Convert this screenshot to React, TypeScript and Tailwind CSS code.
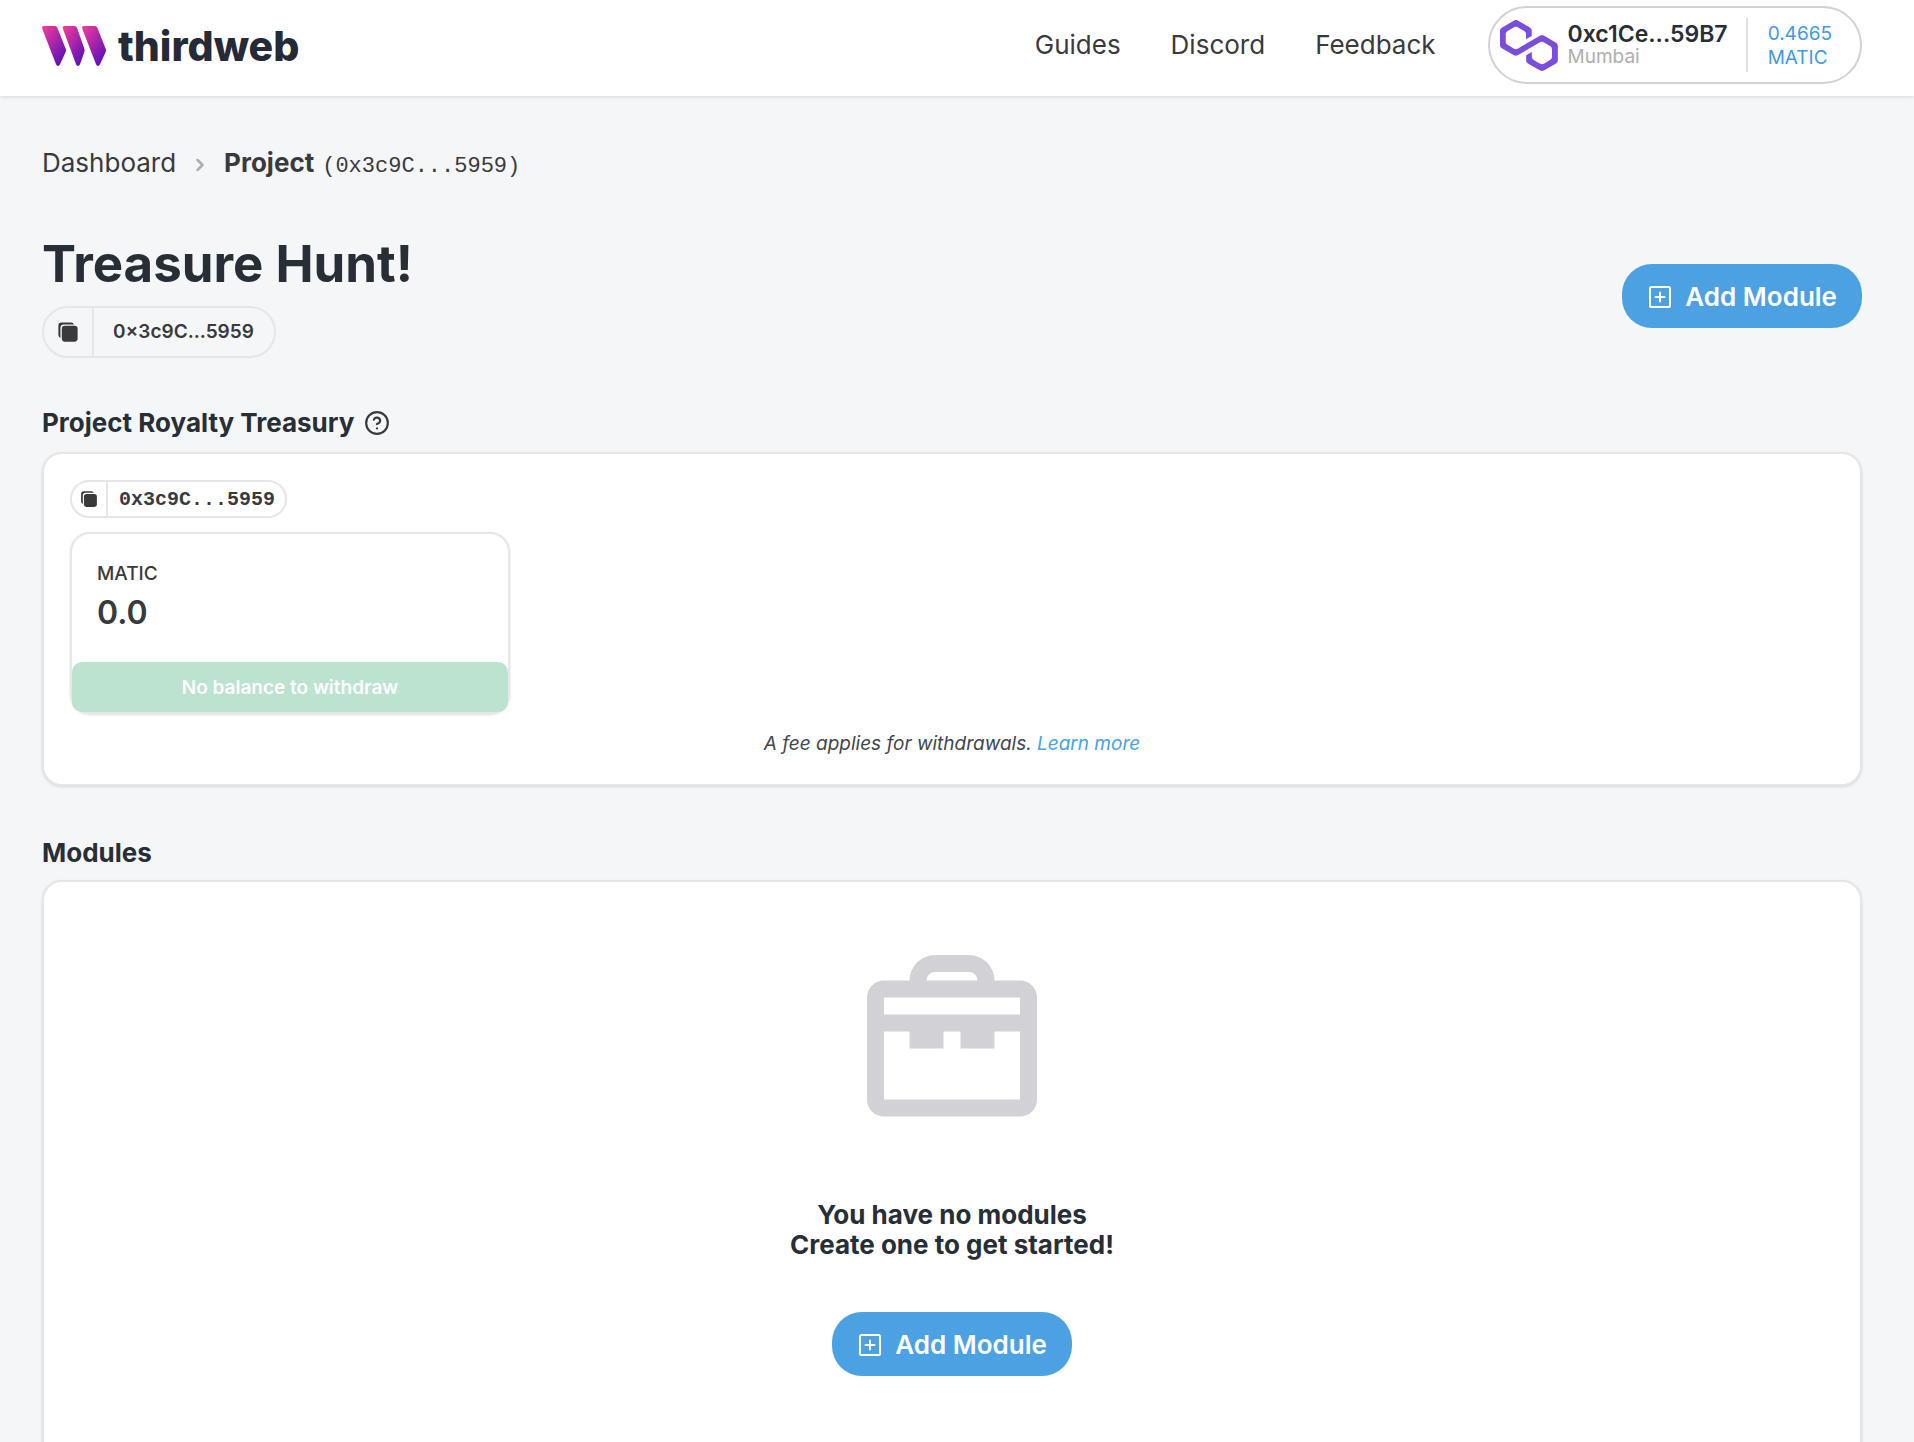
import React from "react";
import { IoCopy } from "react-icons/io5";
import { FiHelpCircle, FiChevronRight } from "react-icons/fi";

function BrandMark() {
  return (
    <svg viewBox="0 0 192 120" className="h-10 w-16" aria-hidden="true">
      <defs>
        <linearGradient id="brand" x1="0" y1="0" x2="0.75" y2="1">
          <stop offset="0.08" stopColor="#ea389c" />
          <stop offset="1" stopColor="#5c10b8" />
        </linearGradient>
      </defs>
      <path fill="url(#brand)" d="M5 0H38Q44 0 46 5L71 68Q73 73 71 78L54 115Q52 120 48 120Q44 120 42 115L1 9Q-1 0 5 0Z" />
      <path fill="url(#brand)" d="M67 0H97Q103 0 105 5L127 68Q129 73 127 78L114 115Q112 120 108 120Q104 120 102 115L63 9Q61 0 67 0Z" />
      <path fill="url(#brand)" d="M125 0H158Q164 0 166 5L191 68Q193 73 191 78L174 115Q172 120 168 120Q164 120 162 115L121 9Q119 0 125 0Z" />
    </svg>
  );
}

function PolygonMark() {
  return (
    <svg viewBox="0 0 38.4 33.5" className="h-[51px] w-[58px] shrink-0" fill="#7b4ddb" aria-hidden="true">
      <path d="M29,10.2c-0.7-0.4-1.6-0.4-2.4,0L21,13.5l-3.8,2.1l-5.5,3.3c-0.7,0.4-1.6,0.4-2.4,0L5,16.3c-0.7-0.4-1.2-1.2-1.2-2.1v-5c0-0.8,0.4-1.6,1.2-2.1l4.3-2.5c0.7-0.4,1.6-0.4,2.4,0L16,7.2c0.7,0.4,1.2,1.2,1.2,2.1v3.3l3.8-2.2V7c0-0.8-0.4-1.6-1.2-2.1l-8-4.7c-0.7-0.4-1.6-0.4-2.4,0L1.2,5C0.4,5.4,0,6.2,0,7v9.4c0,0.8,0.4,1.6,1.2,2.1l8.1,4.7c0.7,0.4,1.6,0.4,2.4,0l5.5-3.2l3.8-2.2l5.5-3.2c0.7-0.4,1.6-0.4,2.4,0l4.3,2.5c0.7,0.4,1.2,1.2,1.2,2.1v5c0,0.8-0.4,1.6-1.2,2.1L29,28.8c-0.7,0.4-1.6,0.4-2.4,0l-4.3-2.5c-0.7-0.4-1.2-1.2-1.2-2.1V21l-3.8,2.2v3.3c0,0.8,0.4,1.6,1.2,2.1l8.1,4.7c0.7,0.4,1.6,0.4,2.4,0l8.1-4.7c0.7-0.4,1.2-1.2,1.2-2.1V17c0-0.8-0.4-1.6-1.2-2.1L29,10.2z" />
    </svg>
  );
}

function ToolboxIcon() {
  return (
    <svg viewBox="0 0 24 24" className="size-[204px]" fill="#d1d1d6" fillRule="evenodd" aria-hidden="true">
      <path d="M10 2H14A3 3 0 0 1 17 5H20A2 2 0 0 1 22 7V19A2 2 0 0 1 20 21H4A2 2 0 0 1 2 19V7A2 2 0 0 1 4 5H7A3 3 0 0 1 10 2ZM10 4A1 1 0 0 0 9 5H15A1 1 0 0 0 14 4ZM4 7V9H20V7ZM4 11V19H20V11H17V13H13V11H11V13H7V11Z" />
    </svg>
  );
}

function PlusBoxIcon() {
  return (
    <svg viewBox="0 0 22 22" className="size-[22px] shrink-0" fill="none" stroke="currentColor" strokeLinecap="round" aria-hidden="true">
      <rect x="1" y="1" width="20" height="20" rx="1.6" strokeWidth="2" />
      <path d="M11 6.5V15.5M6.5 11H15.5" strokeWidth="2" />
    </svg>
  );
}

function AddModuleButton() {
  return (
    <button type="button" className="flex h-16 items-center gap-[14px] rounded-[30px] bg-[#4ba1e2] pt-0.5 pr-[25px] pl-[27px] text-[26px] leading-8 font-semibold text-white">
      <PlusBoxIcon />
      Add Module
    </button>
  );
}

export default function App() {
  return (
    <div className="min-h-screen bg-[#f5f6f8] font-['Inter',sans-serif] text-[#3a3a3c]">
      <header className="flex h-24 items-start justify-between bg-white pr-[52px] pl-[42px] shadow-[0_1px_4px_rgba(0,0,0,0.12)]">
        <a href="#" className="flex h-[91px] items-center gap-3 text-[#262936]">
          <BrandMark />
          <span className="text-[41px] leading-[48px] font-extrabold">thirdweb</span>
        </a>
        <div className="flex items-center gap-[52px] pt-[6px]">
          <nav className="flex gap-[50px] text-[26px] leading-8">
            <a href="#">Guides</a>
            <a href="#">Discord</a>
            <a href="#">Feedback</a>
          </nav>
          <button type="button" className="flex h-[78px] items-center rounded-full border-2 border-[#d1d1d6] pr-7 pl-[10px] text-left">
            <PolygonMark />
            <span className="ml-[10px] flex flex-col border-r-2 border-[#e0e0e4] py-1 pr-[18px]">
              <span className="text-[23px] leading-6 font-semibold text-[#272e36]">0xc1Ce...59B7</span>
              <span className="text-[19px] leading-[22px] text-[#aeaeb2]">Mumbai</span>
            </span>
            <span className="ml-5 flex flex-col pt-0.5 text-[19px] leading-6 text-[#4299e1]">
              <span>0.4665</span>
              <span>MATIC</span>
            </span>
          </button>
        </div>
      </header>

      <main className="pr-[52px] pb-12 pl-[42px]">
        <nav aria-label="Breadcrumb" className="mt-[51px] flex h-8 items-center text-[26px] leading-8">
          <a href="#">Dashboard</a>
          <FiChevronRight className="mx-[14px] mt-1 size-5 text-[#aeaeb2]" strokeWidth={3} />
          <a href="#" className="flex h-8 items-baseline gap-2">
            <span className="font-bold">Project</span>
            <span className="font-['Liberation_Mono',monospace] text-[22px]">(0x3c9C...5959)</span>
          </a>
        </nav>

        <div className="mt-[54px] flex items-center justify-between">
          <div className="flex flex-col items-start gap-[11px]">
            <h1 className="text-[51px] leading-[62px] font-bold text-[#272e36]">Treasure Hunt!</h1>
            <button type="button" className="flex h-[52px] items-stretch rounded-full border-2 border-[#e5e5ea] text-[19px] font-semibold">
              <span className="flex items-center border-r-2 border-[#e5e5ea] pr-[13px] pl-[13px]">
                <IoCopy className="size-[22px]" />
              </span>
              <span className="flex items-center pr-5 pl-[19px]">0×3c9C...5959</span>
            </button>
          </div>
          <AddModuleButton />
        </div>

        <section className="mt-12">
          <div className="flex items-center gap-[10px] leading-[34px]">
            <h2 className="text-[26px] font-bold text-[#272e36]">Project Royalty Treasury</h2>
            <FiHelpCircle className="size-[26px]" />
          </div>
          <div className="mt-3 rounded-[20px] border-2 border-[#e5e5ea] bg-white p-[26px] pb-7 shadow-sm">
            <button type="button" className="flex h-[38px] items-stretch rounded-full border-2 border-[#e5e5ea] font-['Liberation_Mono',monospace] text-[20px] font-bold">
              <span className="flex items-center border-r-2 border-[#e5e5ea] px-2">
                <IoCopy className="size-[18px]" />
              </span>
              <span className="flex items-center pt-0.5 pr-[10px] pl-[11px]">0x3c9C...5959</span>
            </button>
            <div className="mt-[14px] w-[440px] rounded-[20px] border-2 border-[#e5e5ea] shadow-sm">
              <dl className="px-[25px] pt-[26px] pb-7">
                <dt className="text-[19px] leading-7 font-medium">MATIC</dt>
                <dd className="mt-1 text-[32px] leading-[42px] font-semibold">0.0</dd>
              </dl>
              <button type="button" disabled className="h-[50px] w-full rounded-[10px] bg-[#bce3cf] pt-0.5 text-[19px] font-semibold text-white">
                No balance to withdraw
              </button>
            </div>
            <p className="mt-[17px] text-center text-[19px] leading-[25px] text-[#3f464e] italic">
              A fee applies for withdrawals. <a href="#" className="text-[#4ba1e2]">Learn more</a>
            </p>
          </div>
        </section>

        <section className="mt-[50px]">
          <h2 className="text-[26px] leading-[34px] font-bold text-[#272e36]">Modules</h2>
          <div className="mt-[10px] flex flex-col items-center rounded-[20px] border-2 border-[#e5e5ea] bg-white pt-14 pb-[92px] shadow-sm">
            <ToolboxIcon />
            <p className="mt-[58px] text-center text-[26px] leading-[30px] font-bold text-[#272e36]">
              You have no modules
              <br />
              Create one to get started!
            </p>
            <div className="mt-[52px]">
              <AddModuleButton />
            </div>
          </div>
        </section>
      </main>
    </div>
  );
}
